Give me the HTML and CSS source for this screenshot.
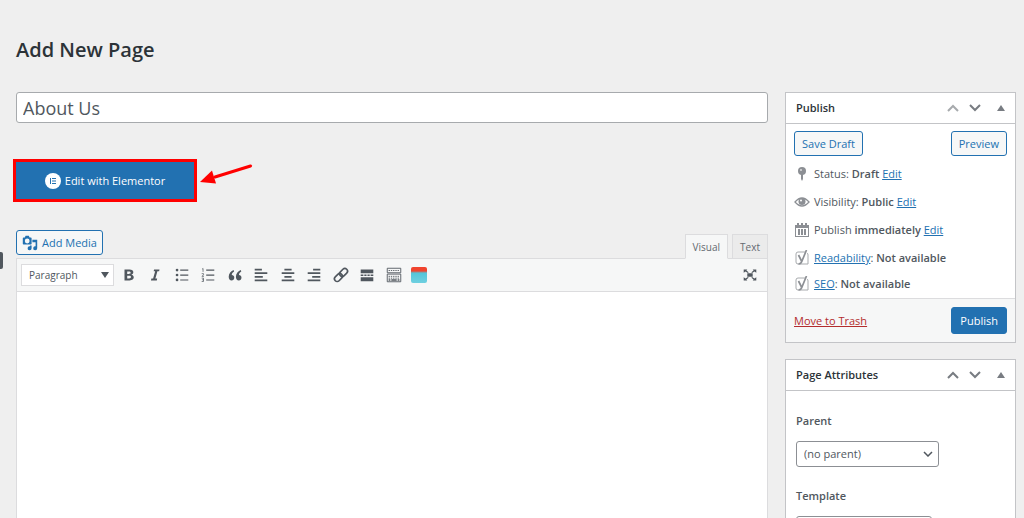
FILE: index.html
```html
<!DOCTYPE html>
<html lang="en">
<head>
  <meta charset="utf-8">
  <title>Add New Page</title>
  <link rel="stylesheet" href="styles.css">
</head>
<body>
  <span class="menu-handle"></span>
  <div class="wrap">
    <h1>Add New Page</h1>
    <form class="columns">
      <main class="post-body">
        <input type="text" class="title-input" value="About Us" aria-label="Page title">

        <div class="switch-mode">
          <button type="button" class="elementor-button">
            <svg width="16" height="16" viewBox="0 0 16 16"><circle cx="8" cy="8" r="8" fill="#fff"/><path d="M5 5h1v6H5zM7 5h4v1H7zM7 7.5h4v1H7zM7 10h4v1H7z" fill="#2271b1"/></svg>
            Edit with Elementor
          </button>
          <svg class="arrow" width="54" height="24" viewBox="0 0 54 24"><path d="M50.500 4L15 15" stroke="#f00" stroke-width="3" stroke-linecap="round"/><path d="M0 20L12 8.500l4 13z" fill="#f00"/></svg>
        </div>

        <div class="editor-tools">
          <button type="button" class="button media-button">
            <svg width="16" height="16" viewBox="0 0 20 20" fill="#2271b1"><path fill-rule="evenodd" d="M2 3h1.500l1-2h4l1 2H11a1 1 0 0 1 1 1v7a1 1 0 0 1-1 1H2a1 1 0 0 1-1-1V4a1 1 0 0 1 1-1zm4.500 1.500a3 3 0 1 0 0 6 3 3 0 0 0 0-6z"/><path d="M13 6h6v10.500a2.500 2.500 0 1 1-2-2.400V9h-4zM10 13h2v3.500a2.500 2.500 0 1 1-2-2.400z"/></svg>
            Add Media
          </button>
          <div class="tabs">
            <button type="button" class="tab active">Visual</button>
            <button type="button" class="tab">Text</button>
          </div>
        </div>

        <div class="editor">
          <div class="toolbar">
            <span class="select-box format-box">
              <select class="format-select" aria-label="Format"><option>Paragraph</option></select>
              <svg width="8" height="6" viewBox="0 0 8 6"><path d="M0 0h8L4 6z" fill="#50575e"/></svg>
            </span>
            <div class="tools">
              <button type="button" aria-label="Bold"><svg viewBox="0 0 20 20"><path fill-rule="evenodd" d="M5 4h5.500c2.800 0 4.300 1.100 4.300 3 0 1.400-.8 2.300-2.200 2.700 1.800.3 2.700 1.400 2.700 2.900 0 2.200-1.700 3.400-4.600 3.400H5zm3 2.200v2.600h1.800c1.300 0 2-.4 2-1.300s-.7-1.300-2-1.300zm0 4.700v2.900h2.100c1.400 0 2.100-.5 2.100-1.500s-.7-1.400-2.200-1.400z"/></svg></button>
              <button type="button" aria-label="Italic"><svg viewBox="0 0 20 20"><path d="M9 4h6l-.4 1.800h-1.900L10.400 14h2L12 16H5.500l.5-2h1.900l2.300-8.200h-1.700z"/></svg></button>
              <button type="button" aria-label="Bulleted list"><svg viewBox="0 0 20 20"><circle cx="4.500" cy="4.500" r="1.500"/><circle cx="4.500" cy="10" r="1.500"/><circle cx="4.500" cy="15.500" r="1.500"/><path d="M8 4h9v1.200H8zM8 9.500h9v1.200H8zM8 15h9v1.200H8z"/></svg></button>
              <button type="button" aria-label="Numbered list"><svg viewBox="0 0 20 20"><path d="M8 4h9v1.200H8zM8 9.500h9v1.200H8zM8 15h9v1.200H8z"/><path d="M3.500 3.500l1-.8V6.500M3 8.500h2v1.300L3.300 11.500H5.500M3 13.500h2v3.700H3M3.500 15.300H5" fill="none" stroke="#50575e" stroke-width=".8"/></svg></button>
              <button type="button" aria-label="Blockquote"><svg viewBox="0 0 20 20"><path d="M8.500 4.500C5.600 5.600 3 8.300 3 11.900 3 14.300 4.300 16 6.200 16c1.700 0 3-1.300 3-3s-1.200-2.900-2.800-2.900c0-1.700 1-3 2.600-4zM16.500 4.500C13.600 5.600 11 8.300 11 11.900c0 2.400 1.300 4.100 3.200 4.100 1.700 0 3-1.300 3-3s-1.200-2.900-2.800-2.900c0-1.700 1-3 2.600-4z"/></svg></button>
              <button type="button" aria-label="Align left"><svg viewBox="0 0 20 20"><path d="M3 3h8v2H3zM3 7h14v2H3zM3 11h9v2H3zM3 15h14v2H3z"/></svg></button>
              <button type="button" aria-label="Align center"><svg viewBox="0 0 20 20"><path d="M6 3h8v2H6zM3 7h14v2H3zM6 11h8v2H6zM3 15h14v2H3z"/></svg></button>
              <button type="button" aria-label="Align right"><svg viewBox="0 0 20 20"><path d="M9 3h8v2H9zM3 7h14v2H3zM8 11h9v2H8zM3 15h14v2H3z"/></svg></button>
              <button type="button" aria-label="Link"><svg viewBox="0 0 20 20"><g transform="rotate(-45 10 10)" fill="none" stroke="#50575e" stroke-width="1.800"><rect x="1" y="7" width="10" height="6" rx="3"/><rect x="9" y="7" width="10" height="6" rx="3"/></g></svg></button>
              <button type="button" aria-label="Read more"><svg viewBox="0 0 20 20"><path d="M3 4h14v4H3zM3 12.500h14V17H3zM3 9.500h3V11H3zM7 9.500h2.500V11H7zM10.500 9.500H13V11h-2.500zM14 9.500h3V11h-3z"/></svg></button>
              <button type="button" aria-label="Toolbar toggle"><svg viewBox="0 0 20 20"><g fill="none" stroke="#50575e"><path d="M2.500 2.500h15v5h-15zM2.500 9h15v8.500h-15z"/><path d="M4 5h12M4 11.500h12M4 13.500h12" stroke-dasharray="1.500 1"/><path d="M4 15.500h2M7 15.500h6M14 15.500h2" stroke-width="1.500"/></g></svg></button>
              <button type="button" aria-label="Shortcodes"><span class="swatch"></span></button>
            </div>
            <button type="button" class="fullscreen" aria-label="Fullscreen"><svg viewBox="0 0 20 20"><path d="M7 8h6v4H7zM3 4h4L6 5l2.500 2-.8.800L5 6 3 7.500zM17 4h-4l1 1-2.500 2 .8.800L15 6l2 1.500zM3 16h4l-1-1 2.500-2-.8-.8L5 14l-2-1.500zM17 16h-4l1-1-2.500-2 .8-.8L15 14l2-1.500z"/></svg></button>
          </div>
          <div class="canvas" contenteditable="true"></div>
        </div>
      </main>

      <aside class="sidebar">
        <section class="postbox">
          <header class="postbox-header">
            <h2>Publish</h2>
            <button type="button" class="up disabled" aria-label="Move up"><svg width="12" height="8" viewBox="0 0 12 8"><path d="M1 7l5-5 5 5"/></svg></button>
            <button type="button" aria-label="Move down"><svg width="12" height="8" viewBox="0 0 12 8"><path d="M1 1l5 5 5-5"/></svg></button>
            <button type="button" class="toggle" aria-label="Toggle panel"><svg width="8" height="6" viewBox="0 0 8 6"><path d="M4 0l4 6H0z"/></svg></button>
          </header>
          <div class="publish-body">
            <div class="minor-actions">
              <button type="button" class="button">Save Draft</button>
              <button type="button" class="button">Preview</button>
            </div>
            <ul class="misc">
              <li><svg viewBox="0 0 16 16"><circle cx="8" cy="5" r="4"/><path d="M7 8h2v5l-1 2-1-2z"/><circle cx="7" cy="4" r="1" fill="#dcdcde"/></svg><span>Status: <b>Draft</b> <a href="#">Edit</a></span></li>
              <li><svg viewBox="0 0 16 16"><path d="M1 8q7-8 14 0-7 8-14 0z" fill="none" stroke="#8c8f94" stroke-width="1.300"/><circle cx="8" cy="7.500" r="3.500"/><circle cx="7" cy="6.500" r="1" fill="#fff"/></svg><span>Visibility: <b>Public</b> <a href="#">Edit</a></span></li>
              <li><svg viewBox="0 0 16 16"><path fill-rule="evenodd" d="M1 3h2V1h2v2h2V1h2v2h2V1h2v2h2v12H1zm1 3v8h12V6z"/><path d="M4 7h2v6H4zM7 7h2v6H7zM10 7h2v6h-2z"/></svg><span>Publish <b>immediately</b> <a href="#">Edit</a></span></li>
              <li><svg viewBox="0 0 16 16"><path d="M11 2H4a2 2 0 0 0-2 2v8a2 2 0 0 0 2 2h10V5a2 2 0 0 0-1-2" fill="none" stroke="#a7aaad"/><path d="M4.500 5l3 6M12.500 0L8 11q-1 3-3.500 3" fill="none" stroke="#8c8f94" stroke-width="1.700"/></svg><span><a href="#">Readability</a>: <b>Not available</b></span></li>
              <li><svg viewBox="0 0 16 16"><path d="M11 2H4a2 2 0 0 0-2 2v8a2 2 0 0 0 2 2h10V5a2 2 0 0 0-1-2" fill="none" stroke="#a7aaad"/><path d="M4.500 5l3 6M12.500 0L8 11q-1 3-3.500 3" fill="none" stroke="#8c8f94" stroke-width="1.700"/></svg><span><a href="#">SEO</a>: <b>Not available</b></span></li>
            </ul>
          </div>
          <footer class="major-actions">
            <a href="#" class="trash">Move to Trash</a>
            <button type="button" class="button primary">Publish</button>
          </footer>
        </section>

        <section class="postbox">
          <header class="postbox-header">
            <h2>Page Attributes</h2>
            <button type="button" aria-label="Move up"><svg width="12" height="8" viewBox="0 0 12 8"><path d="M1 7l5-5 5 5"/></svg></button>
            <button type="button" aria-label="Move down"><svg width="12" height="8" viewBox="0 0 12 8"><path d="M1 1l5 5 5-5"/></svg></button>
            <button type="button" class="toggle" aria-label="Toggle panel"><svg width="8" height="6" viewBox="0 0 8 6"><path d="M4 0l4 6H0z"/></svg></button>
          </header>
          <div class="attributes">
            <label for="parent">Parent</label>
            <span class="select-box parent-box">
              <select id="parent"><option>(no parent)</option></select>
              <svg width="10" height="6" viewBox="0 0 10 6"><path d="M1 1l4 4 4-4" fill="none" stroke="#50575e" stroke-width="1.500"/></svg>
            </span>
            <label for="template">Template</label>
            <span class="select-box template-box">
              <select id="template"><option>Default template</option></select>
              <svg width="10" height="6" viewBox="0 0 10 6"><path d="M1 1l4 4 4-4" fill="none" stroke="#50575e" stroke-width="1.500"/></svg>
            </span>
          </div>
        </section>
      </aside>
    </form>
  </div>
</body>
</html>
```
FILE: styles.css
```css
* {
  box-sizing: border-box;
}
body {
  margin: 0;
  height: 100vh;
  overflow: hidden;
  background: #efefef;
  color: #50575e;
  font-family: "Open Sans", "Noto Sans", sans-serif;
  font-size: 11px;
  line-height: 16px;
}
button, input, select {
  font: inherit;
  color: inherit;
  margin: 0;
}
button {
  padding: 0;
  border: none;
  background: none;
  cursor: pointer;
}
svg {
  display: block;
  flex: none;
}
a {
  color: #2271b1;
}
b {
  font-weight: 600;
}
.menu-handle {
  position: absolute;
  left: 0;
  top: 252px;
  width: 3px;
  height: 17px;
  background: #50575e;
  border-radius: 0 2px 2px 0;
}
.wrap {
  padding: 36px 8px 0 16px;
}
h1 {
  margin: 0 0 28px;
  font-size: 20px;
  line-height: 28px;
  font-weight: 600;
  color: #2c3338;
}
.columns {
  display: grid;
  grid-template-columns: 1fr 231px;
  gap: 17px;
}
.title-input {
  display: block;
  width: 100%;
  height: 31px;
  padding: 0 6px;
  border: 1px solid #a7aaad;
  border-radius: 3px;
  background: #fff;
  font-size: 18px;
}
.switch-mode {
  display: flex;
  gap: 6px;
  margin: 39px 0 31px;
}
.elementor-button {
  display: flex;
  align-items: center;
  justify-content: center;
  gap: 4px;
  width: 178px;
  height: 37px;
  background: #2271b1;
  color: #fff;
  font-weight: 500;
  outline: 3px solid #f00;
}

/* editor */
.editor-tools {
  display: flex;
  justify-content: space-between;
  align-items: flex-start;
  height: 28px;
}
.button {
  height: 25px;
  padding: 0 7px;
  border: 1px solid #2271b1;
  border-radius: 3px;
  background: #f6f7f7;
  color: #2271b1;
}
.media-button {
  display: flex;
  align-items: center;
  gap: 4px;
  padding: 0 5px;
}
.tabs {
  display: flex;
  gap: 4px;
  align-self: flex-end;
  margin-bottom: -1px;
  z-index: 1;
}
.tab {
  height: 25px;
  padding: 0 7px;
  border: 1px solid #dcdcde;
  background: #ebebeb;
  color: #646970;
  font-size: 10px;
}
.tab.active {
  border-bottom-color: #f6f7f7;
  background: #f6f7f7;
}
.editor {
  border: 1px solid #dcdcde;
}
.toolbar {
  display: flex;
  align-items: center;
  height: 33px;
  padding: 0 8px 0 4px;
  border-bottom: 1px solid #dcdcde;
  background: #f6f7f7;
}
.select-box {
  display: block;
  position: relative;
}
.select-box select {
  appearance: none;
  display: block;
  width: 100%;
  height: 26px;
  padding: 0 7px;
  border: 1px solid #8c8f94;
  border-radius: 3px;
  background: #fff;
}
.select-box svg {
  position: absolute;
  right: 6px;
  top: 10px;
  pointer-events: none;
}
.format-box {
  width: 93px;
}
.select-box .format-select {
  height: 22px;
  border-color: #dcdcde;
  border-radius: 0;
  font-size: 10px;
}
.format-box svg {
  right: 5px;
  top: 8px;
}
.tools {
  display: flex;
  justify-content: space-between;
  width: 307px;
  margin-left: 6px;
}
.tools svg, .fullscreen svg {
  width: 18px;
  height: 18px;
  fill: #50575e;
}
.fullscreen {
  margin-left: auto;
}
.swatch {
  display: block;
  width: 16px;
  height: 16px;
  border-radius: 2px;
  background: linear-gradient(#f0442e 0, #f0442e 4px, #55c5d9 6px, #6fd0e0 100%);
}
.canvas {
  min-height: 300px;
  background: #fff;
}

/* side panels */
.postbox {
  margin-bottom: 16px;
  border: 1px solid #c3c4c7;
  background: #fff;
}
.postbox-header {
  display: flex;
  align-items: center;
  gap: 10px;
  height: 31px;
  padding: 0 10px;
  border-bottom: 1px solid #c3c4c7;
}
.postbox-header h2 {
  flex: 1;
  margin: 0;
  font-size: 11px;
  font-weight: 600;
  color: #2c3338;
}
.postbox-header svg {
  fill: none;
  stroke: #787c82;
  stroke-width: 2;
}
.postbox-header .disabled svg {
  stroke: #a7aaad;
}
.postbox-header .toggle {
  margin-left: 6px;
}
.postbox-header .toggle svg {
  fill: #787c82;
  stroke: none;
}
.publish-body {
  padding: 7px 8px 2px;
}
.minor-actions {
  display: flex;
  justify-content: space-between;
}
.misc {
  margin: 4px 0 0;
  padding: 0;
  list-style: none;
}
.misc li {
  display: flex;
  align-items: center;
  gap: 4px;
  height: 28px;
}
.misc li:last-child {
  height: 24px;
}
.misc svg {
  width: 16px;
  height: 16px;
  fill: #8c8f94;
}
.major-actions {
  display: flex;
  align-items: center;
  justify-content: space-between;
  height: 44px;
  padding: 0 8px;
  border-top: 1px solid #dcdcde;
  background: #f6f7f7;
}
.trash {
  color: #b32d2e;
}
.button.primary {
  height: 27px;
  padding: 0 8px;
  background: #2271b1;
  color: #fff;
  font-weight: 500;
}
.attributes {
  padding: 22px 10px 16px;
}
.attributes label {
  display: block;
  margin-bottom: 12px;
  font-weight: 600;
}
.parent-box {
  width: 143px;
  margin-bottom: 21px;
}
.template-box {
  width: 136px;
}
```
